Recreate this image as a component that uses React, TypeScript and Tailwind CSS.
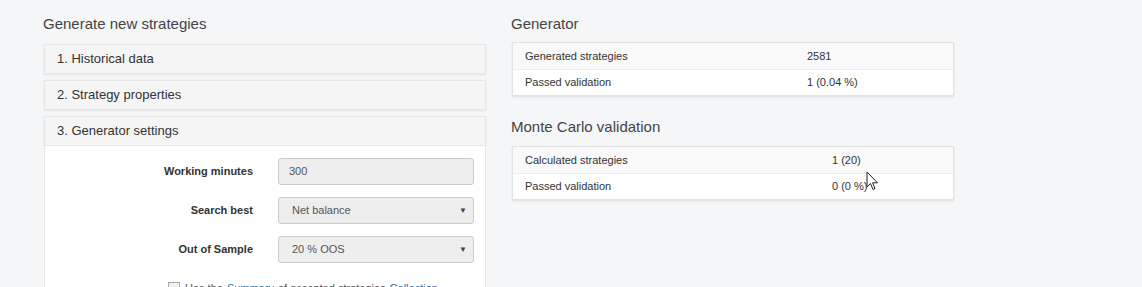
import React from 'react';

const font = { fontFamily: '"Liberation Sans", Arial, sans-serif' };

function PanelHeader({ title }: { title: string }) {
  return (
    <div className="h-[30px] flex items-center px-[12px] bg-[#f5f5f5] border border-[#e6e6e6] shadow-[0_1px_2px_rgba(0,0,0,0.08)] text-[13px] text-[#333]">
      {title}
    </div>
  );
}

function Field({ label, children }: { label: string; children: React.ReactNode }) {
  return (
    <div className="flex items-center">
      <div className="w-[208px] text-right text-[11px] font-bold text-[#333]">{label}</div>
      <div className="ml-[25px] w-[196px]">{children}</div>
    </div>
  );
}

function Select({ value }: { value: string }) {
  return (
    <div className="h-[27px] flex items-center justify-between pl-[13px] pr-[6px] bg-[#eeeeee] border border-[#cccccc] rounded-[3px] text-[11px] text-[#555]">
      <span>{value}</span>
      <span className="text-[8px] text-[#444]">▼</span>
    </div>
  );
}

function StatsTable({ rows, valueCol }: { rows: [string, string][]; valueCol: string }) {
  return (
    <div className="bg-white border border-[#e3e3e3] shadow-[0_1px_2px_rgba(0,0,0,0.1)] text-[11px] text-[#333]">
      {rows.map(([k, v], i) => (
        <div key={k} className={`h-[26px] flex items-center ${i % 2 === 0 ? 'bg-[#f9f9f9]' : 'bg-white border-t border-[#eeeeee]'}`}>
          <div className={`${valueCol} pl-[12px]`}>{k}</div>
          <div>{v}</div>
        </div>
      ))}
    </div>
  );
}

export default function App() {
  return (
    <div className="relative w-[1142px] h-[287px] overflow-hidden bg-[#f5f6f8]" style={font}>
      <div className="flex gap-[25px] pl-[43px] pt-[15px]">
        {/* left column */}
        <div className="w-[443px]">
          <h2 className="text-[15px] leading-[18px] text-[#444] mb-[11px]">Generate new strategies</h2>
          <div className="pl-[1px] space-y-[6px]">
            <PanelHeader title="1. Historical data" />
            <PanelHeader title="2. Strategy properties" />
            <div>
              <PanelHeader title="3. Generator settings" />
              <div className="bg-white border-x border-[#e6e6e6] pt-[12px] pb-[20px] space-y-[12px]">
                <Field label="Working minutes">
                  <div className="h-[27px] flex items-center px-[10px] bg-[#eeeeee] border border-[#cccccc] rounded-[3px] text-[11px] text-[#555]">
                    300
                  </div>
                </Field>
                <Field label="Search best">
                  <Select value="Net balance" />
                </Field>
                <Field label="Out of Sample">
                  <Select value="20 % OOS" />
                </Field>
                <div className="flex items-center pl-[123px] pt-[5px] text-[11px] text-[#555]">
                  <span className="w-[12px] h-[12px] border border-[#aaa] bg-[#f2f2f2] mr-[5px]" />
                  <span>Use the</span>
                  <span className="ml-[4px] text-[#2a6fb0]">Summary</span>
                  <span className="ml-[4px]">of accepted strategies</span>
                  <span className="ml-[4px] text-[#2a6fb0]">Collection</span>
                </div>
              </div>
            </div>
          </div>
        </div>

        {/* right column */}
        <div className="w-[443px]">
          <h2 className="text-[15px] leading-[18px] text-[#444] mb-[9px]">Generator</h2>
          <div className="ml-[1px]">
            <StatsTable
              valueCol="w-[294px]"
              rows={[
                ['Generated strategies', '2581'],
                ['Passed validation', '1 (0.04 %)'],
              ]}
            />
          </div>
          <h2 className="text-[15px] leading-[18px] text-[#444] mt-[22px] mb-[10px]">Monte Carlo validation</h2>
          <div className="ml-[1px]">
            <StatsTable
              valueCol="w-[319px]"
              rows={[
                ['Calculated strategies', '1 (20)'],
                ['Passed validation', '0 (0 %)'],
              ]}
            />
          </div>
        </div>
      </div>

      {/* mouse cursor */}
      <svg className="absolute left-[866px] top-[171px]" width="14" height="21" viewBox="0 0 14 21">
        <path d="M1 1 L1 16 L4.5 12.5 L7 18.5 L9 17.6 L6.6 11.8 L11.5 11.8 Z" fill="white" stroke="#222" strokeWidth="1" strokeLinejoin="round" />
      </svg>
    </div>
  );
}
